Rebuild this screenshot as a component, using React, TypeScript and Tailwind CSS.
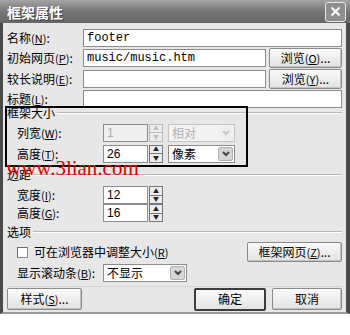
import React from 'react';

const cjk = "font-['Noto_Sans_CJK_SC',sans-serif]";

function Key({ k }: { k: string }) {
  return (
    <span className="text-[11px]">
      (<u>{k}</u>)
    </span>
  );
}

function Label({ text, k, className = '' }: { text: string; k?: string; className?: string }) {
  return (
    <span className={`text-[12px] leading-none text-black whitespace-nowrap ${className}`}>
      {text}
      {k && <Key k={k} />}
      {k && ':'}
    </span>
  );
}

function TextBox({ value = '', className = '', mono = false, disabled = false }: { value?: string; className?: string; mono?: boolean; disabled?: boolean }) {
  return (
    <div
      className={`h-[18px] border border-[#8c8c8c] flex items-center px-[3px] text-[12px] leading-none ${
        disabled ? 'bg-[#efefef] text-[#aaaaaa]' : 'bg-white text-black'
      } ${mono ? "font-['Liberation_Mono',monospace]" : "font-['Liberation_Sans',sans-serif]"} ${className}`}
    >
      {value}
    </div>
  );
}

function Spinner({ disabled = false }: { disabled?: boolean }) {
  const c = disabled ? 'border-[#bcbcbc]' : 'border-[#777]';
  const t = disabled ? 'text-[#c0c0c0]' : 'text-[#222]';
  return (
    <div className="w-[14px] h-[18px] flex flex-col ml-[1px]">
      <div className={`flex-1 bg-[#ececec] border ${c} flex items-center justify-center text-[6px] leading-none ${t}`}>▲</div>
      <div className={`flex-1 bg-[#ececec] border border-t-0 ${c} flex items-center justify-center text-[6px] leading-none ${t}`}>▼</div>
    </div>
  );
}

function Select({ value, className = '', disabled = false }: { value: string; className?: string; disabled?: boolean }) {
  return (
    <div
      className={`h-[18px] border flex items-center ${disabled ? 'border-[#c4c4c4] bg-[#f2f2f2]' : 'border-[#8c8c8c] bg-white'} ${className}`}
    >
      <span className={`flex-1 pl-[3px] text-[12px] leading-none ${disabled ? 'text-[#b0b0b0]' : 'text-black'}`}>{value}</span>
      <div
        className={`w-[15px] h-[14px] mr-[1px] rounded-[2px] flex items-center justify-center ${
          disabled ? 'bg-[#efefef]' : 'bg-[#d6d6d6] border border-[#b0b0b0]'
        }`}
      >
        <svg width="8" height="6" viewBox="0 0 8 6">
          <path d="M1 1 L4 4 L7 1" fill="none" stroke={disabled ? '#c8c8c8' : '#444'} strokeWidth="2" />
        </svg>
      </div>
    </div>
  );
}

function Button({ children, className = '', def = false }: { children: React.ReactNode; className?: string; def?: boolean }) {
  return (
    <div
      className={`flex items-center justify-center rounded-[2px] bg-gradient-to-b from-[#fbfbfb] to-[#e2e2e2] text-[12px] leading-none text-black ${
        def ? 'border-2 border-[#3c3c3c]' : 'border border-[#8a8a8a] shadow-[inset_-1px_-1px_0_#c2c2c2]'
      } ${className}`}
    >
      {children}
    </div>
  );
}

function Group({ title, className = '' }: { title: string; className?: string }) {
  return (
    <div className={`flex items-center ${className}`}>
      <span className="text-[12px] leading-none text-black">{title}</span>
      <div className="flex-1 ml-[2px] border-t border-[#b8b8b8] border-b border-b-white" />
    </div>
  );
}

export default function App() {
  return (
    <div className={`w-[350px] h-[335px] bg-white relative overflow-hidden ${cjk}`}>
      <div className="w-[350px] h-[314px] bg-[#e7e7e7] border-l-[3px] border-r-[4px] border-b-[2px] border-[#4a4a4a] border-b-[#9a9a9a] flex flex-col">
        {/* title bar */}
        <div className="h-[23px] bg-gradient-to-b from-[#a4a4a4] via-[#767676] to-[#676767] flex items-center justify-between pl-[3px] pr-[1px] -ml-[3px] -mr-[4px]">
          <span className="text-white font-bold text-[14px] leading-none ml-[4px] [text-shadow:1px_1px_0_#444]">框架属性</span>
          <div className="w-[21px] h-[20px] rounded-[3px] border border-[#e8e8e8] bg-[#8e8e8e] flex items-center justify-center mr-[3px]">
            <svg width="11" height="11" viewBox="0 0 11 11">
              <path d="M1.5 1.5 L9.5 9.5 M9.5 1.5 L1.5 9.5" stroke="#fff" strokeWidth="2.2" />
            </svg>
          </div>
        </div>

        <div className="flex flex-col pl-[4px] pr-[4px]">
          {/* top rows */}
          <div className="flex items-center h-[19px] mt-[5px]">
            <Label text="名称" k="N" className="w-[76px]" />
            <TextBox value="footer" mono className="flex-1" />
          </div>
          <div className="flex items-center h-[20px] mt-[1px]">
            <Label text="初始网页" k="P" className="w-[76px]" />
            <TextBox value="music/music.htm" mono className="w-[183px]" />
            <Button className="w-[73px] h-[20px] ml-[3px]">
              浏览<Key k="O" />...
            </Button>
          </div>
          <div className="flex items-center h-[20px] mt-[1px]">
            <Label text="较长说明" k="E" className="w-[76px]" />
            <TextBox className="w-[183px]" />
            <Button className="w-[73px] h-[20px] ml-[3px]">
              浏览<Key k="Y" />...
            </Button>
          </div>
          <div className="flex items-center h-[16px] mt-[2px]">
            <Label text="标题" k="L" className="w-[76px]" />
            <TextBox className="flex-1 h-[16px]" />
          </div>

          {/* 框架大小 */}
          <Group title="框架大小" className="h-[12px]" />
          <div className="flex items-center h-[19px] mt-[4px] pl-[10px]">
            <Label text="列宽" k="W" className="w-[86px]" />
            <TextBox value="1" disabled className="w-[45px]" />
            <Spinner disabled />
            <Select value="相对" disabled className="w-[67px] ml-[5px]" />
          </div>
          <div className="flex items-center h-[19px] mt-[2px] pl-[10px]">
            <Label text="高度" k="T" className="w-[86px]" />
            <TextBox value="26" className="w-[45px]" />
            <Spinner />
            <Select value="像素" className="w-[67px] ml-[5px]" />
          </div>

          {/* 边距 */}
          <Group title="边距" className="mt-[6px] h-[12px]" />
          <div className="flex items-center h-[18px] mt-[5px] pl-[10px]">
            <Label text="宽度" k="I" className="w-[86px]" />
            <TextBox value="12" className="w-[45px]" />
            <Spinner />
          </div>
          <div className="flex items-center h-[18px] pl-[10px]">
            <Label text="高度" k="G" className="w-[86px]" />
            <TextBox value="16" className="w-[45px]" />
            <Spinner />
          </div>

          {/* 选项 */}
          <Group title="选项" className="mt-[4px] h-[12px]" />
          <div className="flex items-center h-[20px] mt-[4px] pl-[10px]">
            <div className="w-[11px] h-[11px] border border-[#8c8c8c] border-t-[#6e6e6e] border-l-[#6e6e6e] bg-white mr-[6px]" />
            <span className="text-[12px] leading-none">
              可在浏览器中调整大小<Key k="R" />
            </span>
            <Button className="w-[95px] h-[20px] ml-auto">
              框架网页<Key k="Z" />...
            </Button>
          </div>
          <div className="flex items-center h-[16px] mt-[3px] pl-[10px]">
            <Label text="显示滚动条" k="B" className="w-[86px]" />
            <Select value="不显示" className="w-[84px] h-[16px]" />
          </div>

          {/* bottom buttons */}
          <div className="mt-[5px] border-t border-[#d4d4d4]" />
          <div className="flex items-center h-[22px] mt-[1px]">
            <Button className="w-[75px] h-[22px]">
              样式<Key k="S" />...
            </Button>
            <Button def className="w-[72px] h-[23px] ml-auto">确定</Button>
            <Button className="w-[70px] h-[22px] ml-[6px]">取消</Button>
          </div>
        </div>
      </div>

      {/* highlight annotation */}
      <div className="absolute left-[5px] top-[106px] w-[243px] h-[61px] border-2 border-black pointer-events-none" />

      {/* watermark */}
      <span className="absolute left-[6px] top-[158px] text-[21px] leading-none text-[#e60000] font-['Liberation_Serif',serif] pointer-events-none">
        www.3lian.com
      </span>
    </div>
  );
}
